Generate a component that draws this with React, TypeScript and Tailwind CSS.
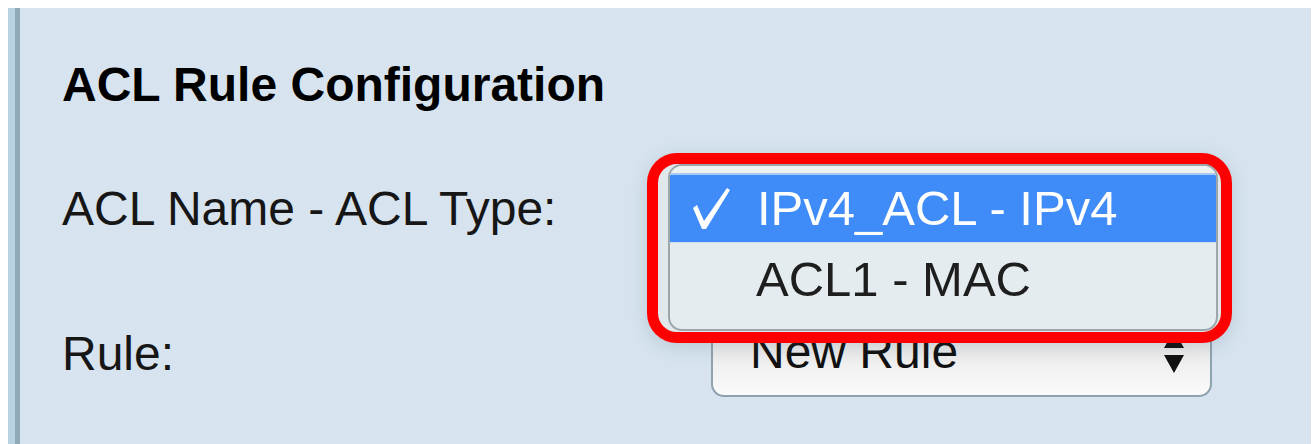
import React from 'react';

const font = { fontFamily: '"Liberation Sans", Arial, sans-serif' };

// up/down stepper glyph drawn at the right end of a closed select
const SelectArrows = () => (
  <svg width="22" height="47" viewBox="0 0 22 47" className="shrink-0">
    <polygon points="1,20 11,2 21,20" fill="#111" />
    <polygon points="1,27 21,27 11,45" fill="#111" />
  </svg>
);

const CheckMark = () => (
  <svg width="37" height="42" viewBox="0 0 37 42" className="shrink-0">
    <polygon points="0,20 4,17 11,33 34,0 37,2 13,41 9,41" fill="#fff" />
  </svg>
);

const aclOptions = [
  { id: 'ipv4', label: 'IPv4_ACL - IPv4', selected: true },
  { id: 'mac', label: 'ACL1 - MAC', selected: false },
];

const OptionsPopup = () => (
  <div className="absolute left-[-64px] top-[-10px] z-10 h-[190px] w-[585px] rounded-[30px] border-[11px] border-[#ff0000] bg-[#e1e8eb] shadow-[0_4px_18px_rgba(60,80,100,0.18)]">
    <div className="ml-[10px] mr-[3px] flex h-[167px] flex-col overflow-hidden rounded-[14px] border-2 border-[#9ca6ab] bg-[#e4ecef]">
      <div className="h-[9px] shrink-0 border-b-2 border-[#a9c9f3] bg-[#eef2f0]" />
      {aclOptions.map(opt =>
        opt.selected ? (
          <div key={opt.id} className="flex h-[67px] shrink-0 items-center bg-[#3f8cf8] pl-[23px] text-white">
            <CheckMark />
            <span className="ml-[27px] text-[49px] leading-[67px]">{opt.label}</span>
          </div>
        ) : (
          <div key={opt.id} className="flex h-[72px] shrink-0 items-center border-t border-[#cfdff2] pl-[86px] text-[#1e1e1e]">
            <span className="text-[49px] leading-[72px]">{opt.label}</span>
          </div>
        )
      )}
    </div>
  </div>
);

const SelectBox = ({ value }: { value: string }) => (
  <div className="flex h-[91px] w-[501px] items-center justify-between rounded-[13px] border-[2.5px] border-[#8ea3ad] bg-gradient-to-b from-[#dcdcdc] to-[#fbfbfb] pl-[37px] pr-[25px]">
    <span className="text-[48px] leading-[56px] text-[#111]">{value}</span>
    <SelectArrows />
  </div>
);

export default function App() {
  return (
    <div style={font} className="flex h-[444px] w-[1316px] bg-white pl-2 pr-[5px] pt-2">
      <div className="w-[7px] bg-[#b8d1e3]" />
      <div className="w-[5px] bg-[#8fa9b8]" />
      <div className="flex-1 bg-[#d7e4f0] pl-[42px] pt-[49px]">
        <h1 className="text-[48px] font-bold leading-[56px] text-black">ACL Rule Configuration</h1>

        <div className="mt-[50px] flex h-[91px] items-center">
          <label className="w-[649px] text-[48px] leading-[56px] text-[#161616]">ACL Name - ACL Type:</label>
          {/* the open menu sits over its own select */}
          <div className="relative h-[91px] w-[501px]">
            <OptionsPopup />
          </div>
        </div>

        <div className="mt-[52px] flex h-[91px] items-center">
          <label className="w-[649px] pt-[4px] text-[48px] leading-[56px] text-[#161616]">Rule:</label>
          <SelectBox value="New Rule" />
        </div>
      </div>
    </div>
  );
}
